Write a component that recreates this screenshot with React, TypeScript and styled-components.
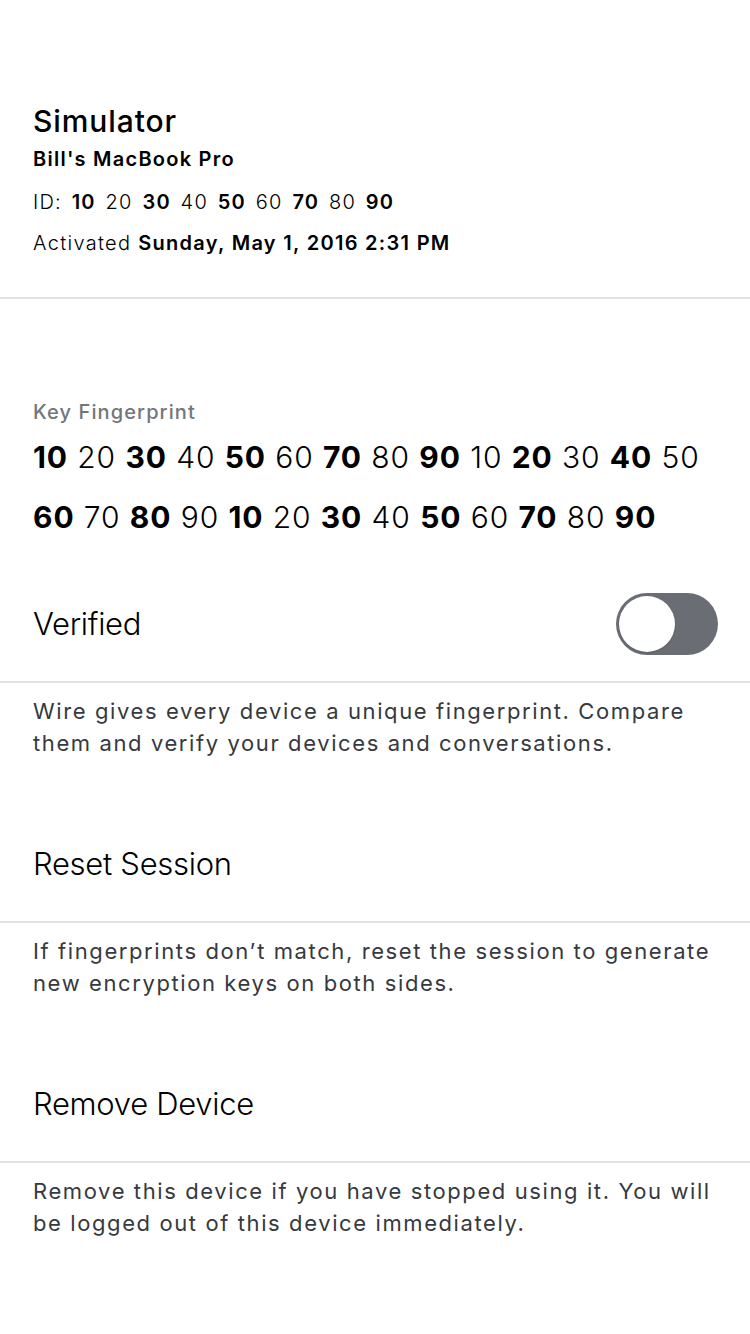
import styled, { createGlobalStyle } from "styled-components"

const GlobalStyle = createGlobalStyle`
  html, body {
    margin: 0;
    padding: 0;
    background: #ffffff;
  }
  body {
    font-family: Inter, Roboto, "Liberation Sans", sans-serif;
    color: #000000;
    -webkit-font-smoothing: antialiased;
  }
`

const Page = styled.div`
  width: 750px;
  min-height: 1334px;
  background: #ffffff;
  display: flex;
  flex-direction: column;
`

const Header = styled.div`
  padding: 100px 33px 33px;
  display: flex;
  flex-direction: column;
  border-bottom: 2px solid #e1e3e6;
`

const Title = styled.div`
  font-size: 30px;
  font-weight: 500;
  line-height: 42px;
  letter-spacing: 0.9px;
`

const Subtitle = styled.div`
  font-size: 20px;
  font-weight: 600;
  line-height: 32px;
  margin-top: 1px;
  margin-bottom: 7px;
  letter-spacing: 1.25px;
`

const InfoLine = styled.div`
  font-size: 20px;
  font-weight: 300;
  line-height: 41px;
  letter-spacing: 1.3px;
`

const Ids = styled(InfoLine)`
  letter-spacing: 1.2px;
  word-spacing: 3px;
`

const Strong = styled.span`
  font-weight: 700;
`

const Semi = styled.span`
  font-weight: 600;
`

const FingerprintSection = styled.div`
  padding: 99px 41px 0 33px;
  display: flex;
  flex-direction: column;
`

const Label = styled.div`
  font-size: 20px;
  font-weight: 500;
  color: #72767b;
  line-height: 28px;
  letter-spacing: 1.1px;
`

const Fingerprint = styled.div`
  font-size: 30px;
  font-weight: 300;
  line-height: 60px;
  margin-top: 1px;
  letter-spacing: 0.9px;
`

const Row = styled.div<{ $height: number; $offset?: number }>`
  height: ${(p) => p.$height}px;
  margin-top: ${(p) => p.$offset ?? 0}px;
  padding: 0 32px 0 33px;
  display: flex;
  align-items: center;
  justify-content: space-between;
  border-bottom: 2px solid #e1e3e6;
`

const RowTitle = styled.div`
  font-size: 31px;
  font-weight: 300;
  letter-spacing: -0.3px;
`

const Toggle = styled.div`
  width: 102px;
  height: 62px;
  border-radius: 31px;
  background: #6a6d73;
  padding: 3px;
  box-sizing: border-box;
  display: flex;
  align-items: center;
`

const Knob = styled.div`
  width: 56px;
  height: 56px;
  border-radius: 50%;
  background: #ffffff;
  box-shadow: 0 1px 2px rgba(0, 0, 0, 0.15);
`

const Description = styled.div`
  padding: 12px 20px 0 33px;
  height: 123px;
  box-sizing: border-box;
  font-size: 22px;
  font-weight: 400;
  line-height: 32px;
  letter-spacing: 1.6px;
  color: #36393e;
`

function App() {
  return (
    <Page>
      <GlobalStyle />
      <Header>
        <Title>Simulator</Title>
        <Subtitle>Bill's MacBook Pro</Subtitle>
        <Ids>
          ID: <Semi>10</Semi> 20 <Semi>30</Semi> 40 <Semi>50</Semi> 60{" "}
          <Semi>70</Semi> 80 <Semi>90</Semi>
        </Ids>
        <InfoLine>
          Activated <Semi>Sunday, May 1, 2016 2:31 PM</Semi>
        </InfoLine>
      </Header>
      <FingerprintSection>
        <Label>Key Fingerprint</Label>
        <Fingerprint>
          <Strong>10</Strong> 20 <Strong>30</Strong> 40 <Strong>50</Strong> 60{" "}
          <Strong>70</Strong> 80 <Strong>90</Strong> 10 <Strong>20</Strong> 30{" "}
          <Strong>40</Strong> 50 <Strong>60</Strong> 70 <Strong>80</Strong> 90{" "}
          <Strong>10</Strong> 20 <Strong>30</Strong> 40 <Strong>50</Strong> 60{" "}
          <Strong>70</Strong> 80 <Strong>90</Strong>
        </Fingerprint>
      </FingerprintSection>
      <Row $height={115} $offset={19}>
        <RowTitle>Verified</RowTitle>
        <Toggle>
          <Knob />
        </Toggle>
      </Row>
      <Description>
        Wire gives every device a unique fingerprint. Compare them and verify
        your devices and conversations.
      </Description>
      <Row $height={115}>
        <RowTitle>Reset Session</RowTitle>
      </Row>
      <Description>
        If fingerprints don’t match, reset the session to generate new
        encryption keys on both sides.
      </Description>
      <Row $height={115}>
        <RowTitle>Remove Device</RowTitle>
      </Row>
      <Description>
        Remove this device if you have stopped using it. You will be logged out
        of this device immediately.
      </Description>
    </Page>
  )
}

export default App
